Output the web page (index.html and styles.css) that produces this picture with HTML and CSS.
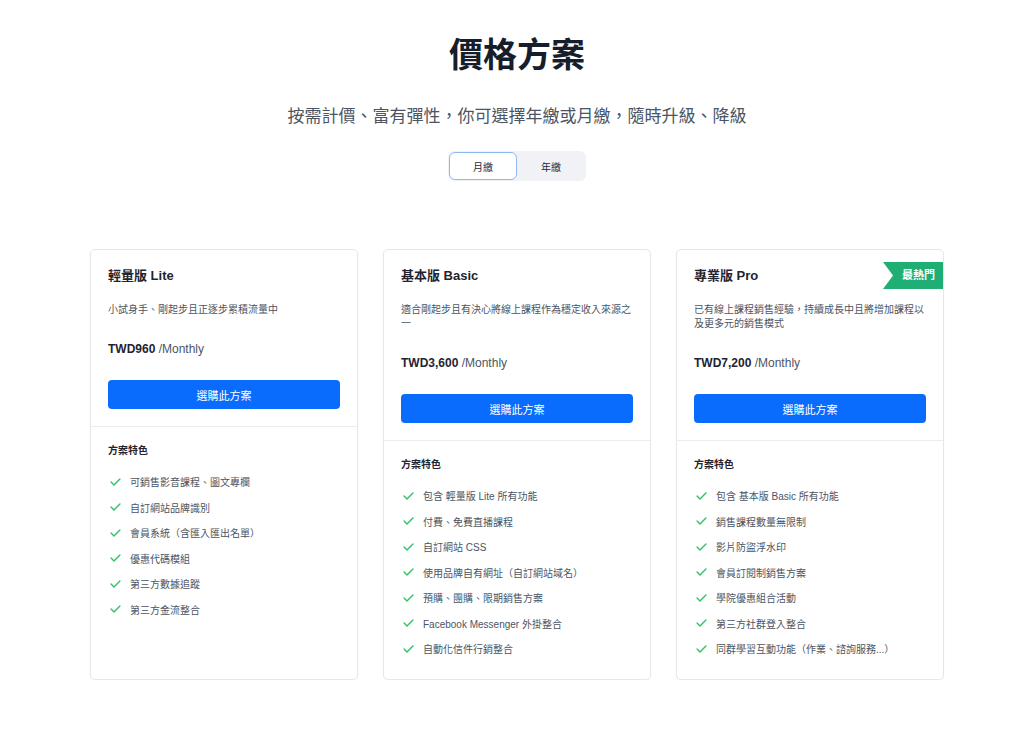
FILE: index.html
```html
<!DOCTYPE html>
<html lang="zh-Hant">
<head>
<meta charset="utf-8">
<title>價格方案</title>
<link rel="stylesheet" href="styles.css">
</head>
<body>
<main class="page">
  <h1 class="title">價格方案</h1>
  <p class="subtitle">按需計價、富有彈性，你可選擇年繳或月繳，隨時升級、降級</p>
  <div class="toggle-wrap">
    <div class="toggle">
      <button class="toggle-btn active">月繳</button>
      <button class="toggle-btn">年繳</button>
    </div>
  </div>

  <section class="cards">
    <article class="card">
      <div class="card-top">
        <h3 class="plan-name">輕量版 Lite</h3>
        <p class="plan-desc">小試身手、剛起步且正逐步累積流量中</p>
        <p class="price"><strong>TWD960</strong> /Monthly</p>
        <button class="buy">選購此方案</button>
      </div>
      <div class="features">
        <h4 class="features-title">方案特色</h4>
        <ul class="feature-list">
          <li><svg class="check" viewBox="0 0 12 9"><path d="M1 4.6 L4.3 7.8 L11 1.2"/></svg>可銷售影音課程、圖文專欄</li>
          <li><svg class="check" viewBox="0 0 12 9"><path d="M1 4.6 L4.3 7.8 L11 1.2"/></svg>自訂網站品牌識別</li>
          <li><svg class="check" viewBox="0 0 12 9"><path d="M1 4.6 L4.3 7.8 L11 1.2"/></svg>會員系統（含匯入匯出名單）</li>
          <li><svg class="check" viewBox="0 0 12 9"><path d="M1 4.6 L4.3 7.8 L11 1.2"/></svg>優惠代碼模組</li>
          <li><svg class="check" viewBox="0 0 12 9"><path d="M1 4.6 L4.3 7.8 L11 1.2"/></svg>第三方數據追蹤</li>
          <li><svg class="check" viewBox="0 0 12 9"><path d="M1 4.6 L4.3 7.8 L11 1.2"/></svg>第三方金流整合</li>
        </ul>
      </div>
    </article>

    <article class="card">
      <div class="card-top">
        <h3 class="plan-name">基本版 Basic</h3>
        <p class="plan-desc">適合剛起步且有決心將線上課程作為穩定收入來源之一</p>
        <p class="price"><strong>TWD3,600</strong> /Monthly</p>
        <button class="buy">選購此方案</button>
      </div>
      <div class="features">
        <h4 class="features-title">方案特色</h4>
        <ul class="feature-list">
          <li><svg class="check" viewBox="0 0 12 9"><path d="M1 4.6 L4.3 7.8 L11 1.2"/></svg>包含 輕量版 Lite 所有功能</li>
          <li><svg class="check" viewBox="0 0 12 9"><path d="M1 4.6 L4.3 7.8 L11 1.2"/></svg>付費、免費直播課程</li>
          <li><svg class="check" viewBox="0 0 12 9"><path d="M1 4.6 L4.3 7.8 L11 1.2"/></svg>自訂網站 CSS</li>
          <li><svg class="check" viewBox="0 0 12 9"><path d="M1 4.6 L4.3 7.8 L11 1.2"/></svg>使用品牌自有網址（自訂網站域名）</li>
          <li><svg class="check" viewBox="0 0 12 9"><path d="M1 4.6 L4.3 7.8 L11 1.2"/></svg>預購、團購、限期銷售方案</li>
          <li><svg class="check" viewBox="0 0 12 9"><path d="M1 4.6 L4.3 7.8 L11 1.2"/></svg>Facebook Messenger 外掛整合</li>
          <li><svg class="check" viewBox="0 0 12 9"><path d="M1 4.6 L4.3 7.8 L11 1.2"/></svg>自動化信件行銷整合</li>
        </ul>
      </div>
    </article>

    <article class="card">
      <span class="ribbon">最熱門</span>
      <div class="card-top">
        <h3 class="plan-name">專業版 Pro</h3>
        <p class="plan-desc">已有線上課程銷售經驗，持續成長中且將增加課程以及更多元的銷售模式</p>
        <p class="price"><strong>TWD7,200</strong> /Monthly</p>
        <button class="buy">選購此方案</button>
      </div>
      <div class="features">
        <h4 class="features-title">方案特色</h4>
        <ul class="feature-list">
          <li><svg class="check" viewBox="0 0 12 9"><path d="M1 4.6 L4.3 7.8 L11 1.2"/></svg>包含 基本版 Basic 所有功能</li>
          <li><svg class="check" viewBox="0 0 12 9"><path d="M1 4.6 L4.3 7.8 L11 1.2"/></svg>銷售課程數量無限制</li>
          <li><svg class="check" viewBox="0 0 12 9"><path d="M1 4.6 L4.3 7.8 L11 1.2"/></svg>影片防盜浮水印</li>
          <li><svg class="check" viewBox="0 0 12 9"><path d="M1 4.6 L4.3 7.8 L11 1.2"/></svg>會員訂閱制銷售方案</li>
          <li><svg class="check" viewBox="0 0 12 9"><path d="M1 4.6 L4.3 7.8 L11 1.2"/></svg>學院優惠組合活動</li>
          <li><svg class="check" viewBox="0 0 12 9"><path d="M1 4.6 L4.3 7.8 L11 1.2"/></svg>第三方社群登入整合</li>
          <li><svg class="check" viewBox="0 0 12 9"><path d="M1 4.6 L4.3 7.8 L11 1.2"/></svg>同群學習互動功能（作業、諮詢服務...）</li>
        </ul>
      </div>
    </article>
  </section>
</main>
</body>
</html>
```

FILE: styles.css
```css
* { box-sizing: border-box; }

html, body {
  margin: 0;
  padding: 0;
  background: #ffffff;
}

body {
  font-family: "Liberation Sans", "Noto Sans CJK TC", sans-serif;
  color: #1f2937;
}

.page {
  width: 864px;
  margin: 0 auto;
  padding: 33px 0 0 10px;
}

.title {
  margin: 0;
  text-align: center;
  font-size: 34px;
  line-height: 44px;
  font-weight: 700;
  color: #161d2b;
}

.subtitle {
  margin: 28px 0 0;
  text-align: center;
  font-size: 17px;
  line-height: 24px;
  color: #4b5563;
}

.toggle-wrap {
  display: flex;
  justify-content: center;
  margin-top: 22px;
}

.toggle {
  display: inline-flex;
  background: #f1f2f5;
  border-radius: 6px;
  padding: 1px;
}

.toggle-btn {
  width: 68px;
  height: 28px;
  border: 1.5px solid transparent;
  border-radius: 6px;
  background: transparent;
  font-family: inherit;
  font-size: 10px;
  color: #1f2937;
  cursor: pointer;
}

.toggle-btn.active {
  background: #ffffff;
  border-color: #91b6f3;
}

.cards {
  margin-top: 68px;
  display: grid;
  grid-template-columns: repeat(3, 268px);
  column-gap: 25px;
  align-items: stretch;
}

.card {
  position: relative;
  border: 1px solid #e6e7ea;
  border-radius: 5px;
  background: #fff;
  box-shadow: 0 1px 2px rgba(0, 0, 0, 0.04);
  overflow: hidden;
}

.ribbon {
  position: absolute;
  top: 12px;
  right: -1px;
  width: 61px;
  height: 27px;
  background: #1fae74;
  color: #fff;
  font-size: 11px;
  font-weight: 700;
  line-height: 27px;
  padding-left: 19px;
  clip-path: polygon(0 0, 100% 0, 100% 100%, 0 100%, 10px 50%);
}

.card-top {
  padding: 16px 17px 17px;
  border-bottom: 1px solid #ececef;
}

.plan-name {
  margin: 0;
  font-size: 13px;
  line-height: 20px;
  font-weight: 700;
  color: #1f2430;
}

.plan-desc {
  margin: 17px 0 0;
  font-size: 10px;
  line-height: 14px;
  color: #4b5563;
}

.price {
  margin: 23px 0 0;
  font-size: 12px;
  line-height: 18px;
  color: #4b5563;
}

.price strong {
  color: #1f2430;
  font-weight: 700;
}

.buy {
  display: block;
  width: 100%;
  height: 29px;
  margin-top: 22px;
  border: none;
  border-radius: 4px;
  background: #0a6cfd;
  color: #fff;
  font-family: inherit;
  font-size: 11px;
  cursor: pointer;
}

.features {
  padding: 17px 17px 17px;
}

.features-title {
  margin: 0;
  font-size: 10px;
  line-height: 14px;
  font-weight: 700;
  color: #1f2430;
}

.feature-list {
  list-style: none;
  margin: 11px 0 0;
  padding: 0;
}

.feature-list li {
  display: flex;
  align-items: center;
  height: 25.5px;
  font-size: 10px;
  color: #4b5563;
}

.check {
  width: 11px;
  height: 8px;
  margin: 0 9px 0 2px;
  flex: none;
  fill: none;
  stroke: #2ec466;
  stroke-width: 1.6;
  stroke-linecap: round;
  stroke-linejoin: round;
}
```
